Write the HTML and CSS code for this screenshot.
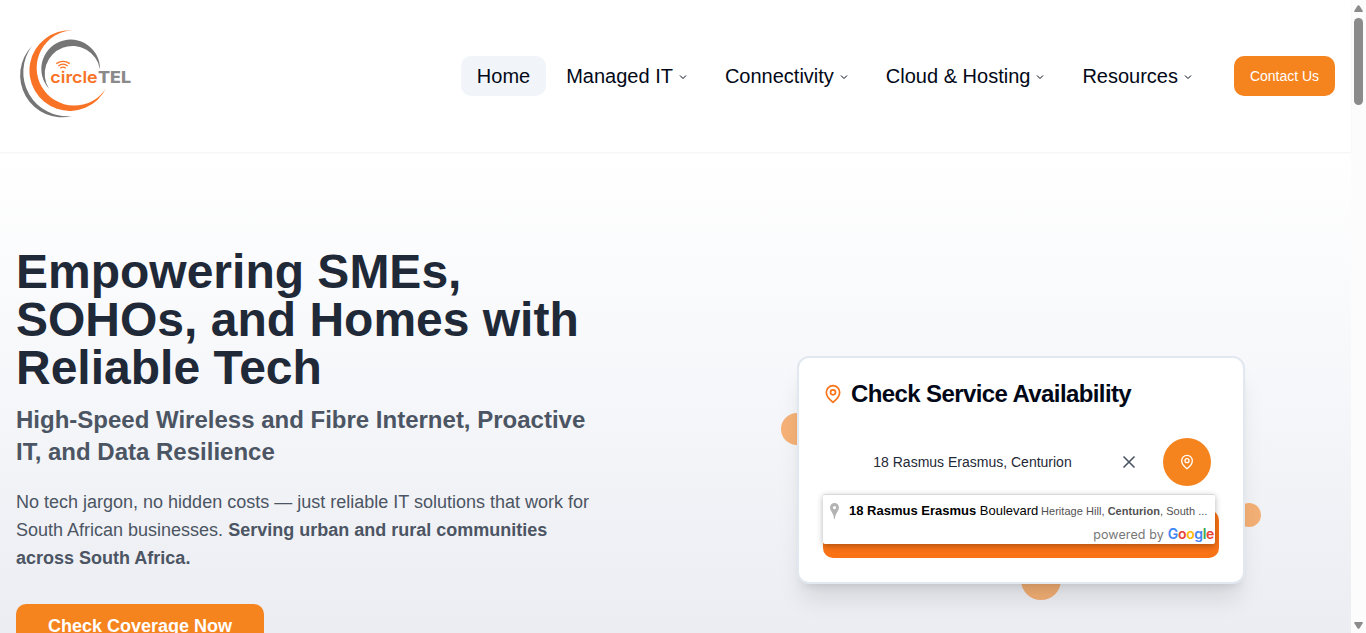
FILE: index.html
```html
<!DOCTYPE html>
<html lang="en">
<head>
<meta charset="utf-8">
<title>CircleTEL</title>
<link rel="stylesheet" href="styles.css">
</head>
<body>
<div class="window">
<div class="page">
  <header class="header">
    <svg class="logo" viewBox="0 0 480 360" role="img" aria-label="circleTEL">
      <path fill="#757575" d="M96 108A126 126 0 0 0 217 318A132 132 0 0 1 96 108Z"/>
      <path fill="#f97326" d="M217 61A121 121 0 1 0 318 235A113 113 0 1 1 217 61Z"/>
      <path fill="#757575" d="M147 236A88 88 0 1 1 300 178A83.500 83.500 0 1 0 147 236Z"/>
      <g fill="none" stroke="#f97326" stroke-width="4"><path d="M169 161q20-14 40 0M175 168q14-11 28 0M181 175q8-7 16 0"/></g>
      <text class="logo-a" x="151" y="218" textLength="142" lengthAdjust="spacingAndGlyphs">circle</text>
      <text class="logo-b" x="294" y="218" textLength="99" lengthAdjust="spacingAndGlyphs">TEL</text>
    </svg>
    <nav class="nav">
      <a class="item active">Home</a>
      <a class="item">Managed IT<svg class="chev" viewBox="0 0 24 24"><path d="m6 9 6 6 6-6"/></svg></a>
      <a class="item">Connectivity<svg class="chev" viewBox="0 0 24 24"><path d="m6 9 6 6 6-6"/></svg></a>
      <a class="item">Cloud &amp; Hosting<svg class="chev" viewBox="0 0 24 24"><path d="m6 9 6 6 6-6"/></svg></a>
      <a class="item">Resources<svg class="chev" viewBox="0 0 24 24"><path d="m6 9 6 6 6-6"/></svg></a>
    </nav>
    <a class="contact">Contact Us</a>
  </header>
  <main class="hero">
    <section class="copy">
      <h1>Empowering SMEs,<br>SOHOs, and Homes with<br>Reliable Tech</h1>
      <h2>High-Speed Wireless and Fibre Internet, Proactive<br>IT, and Data Resilience</h2>
      <p>No tech jargon, no hidden costs — just reliable IT solutions that work for<br>South African businesses. <strong>Serving urban and rural communities<br>across South Africa.</strong></p>
      <a class="cta">Check Coverage Now</a>
    </section>
    <section class="visual">
      <span class="dot dot-left"></span><span class="dot dot-right"></span><span class="dot dot-bottom"></span>
      <div class="card">
        <h3><svg class="pin" viewBox="0 0 24 24"><path d="M20 10c0 6-8 12-8 12s-8-6-8-12a8 8 0 0 1 16 0Z"/><circle cx="12" cy="10" r="3"/></svg>Check Service Availability</h3>
        <div class="search">
          <span class="address">18 Rasmus Erasmus, Centurion</span>
          <svg class="clear" viewBox="0 0 24 24"><path d="M18 6 6 18M6 6l12 12"/></svg>
          <span class="locate"><svg viewBox="0 0 24 24"><path d="M20 10c0 6-8 12-8 12s-8-6-8-12a8 8 0 0 1 16 0Z"/><circle cx="12" cy="10" r="3"/></svg></span>
        </div>
        <div class="submit"></div>
        <div class="suggest">
          <div class="row">
            <svg class="marker" viewBox="0 0 9 16"><path fill-rule="evenodd" d="M4.500 0A4.500 4.500 0 0 0 0 4.500C0 8 4 10.500 4.100 16h.8C5 10.500 9 8 9 4.500A4.500 4.500 0 0 0 4.500 0Zm0 3a1.600 1.600 0 1 1 0 3.200 1.600 1.600 0 0 1 0-3.200Z"/></svg>
            <span class="main"><b>18 Rasmus</b> <b>Erasmus</b> Boulevard</span>
            <span class="minor">Heritage Hill, <b>Centurion</b>, South ...</span>
          </div>
          <div class="powered">powered by <span class="google"><i class="blue">G</i><i class="red">o</i><i class="yellow">o</i><i class="blue">g</i><i class="green">l</i><i class="red">e</i></span></div>
        </div>
      </div>
    </section>
  </main>
</div>
<aside class="scroll">
  <svg viewBox="0 0 9 7"><path d="M1 7h7q1.300-.2.700-1.300L5.500.8q-1-1.200-2 0L.3 5.700Q-.3 6.800 1 7Z"/></svg>
  <span class="thumb"></span>
  <svg class="down" viewBox="0 0 9 7"><path d="M1 0h7q1.300.2.700 1.300L5.500 6.200q-1 1.200-2 0L.3 1.300Q-.3.200 1 0Z"/></svg>
</aside>
</div>
</body>
</html>
```
FILE: styles.css
```css
* { box-sizing: border-box; }
body { margin: 0; font-family: "Liberation Sans", Arial, sans-serif; color: #020817; }
h1, h2, h3, p { margin: 0; }
.window { display: flex; height: 633px; overflow: hidden; }
.page { width: 1351px; flex: none; display: flex; flex-direction: column; }
.header { height: 152px; flex: none; display: flex; align-items: flex-start; padding-right: 16px; background: #fff; box-shadow: 0 1px 2px rgba(0,0,0,.05); position: relative; }
.logo { width: 160px; height: 120px; margin-top: 10px; }
.logo-a, .logo-b { font-family: Inter, sans-serif; font-weight: 600; font-size: 49px; }
.logo-a { fill: #f97326; }
.logo-b { fill: #8a8a8a; font-weight: 800; }
.nav { display: flex; gap: 4px; margin: 56px 24px 0 auto; }
.item { display: flex; align-items: center; height: 40px; padding: 0 16px; border-radius: 10px; font-size: 20px; white-space: nowrap; }
.active { background: #f1f5f9; }
.chev { width: 12px; height: 12px; margin: 2px 0 0 4px; fill: none; stroke: currentColor; stroke-width: 2; }
.contact { width: 101px; height: 40px; margin-top: 56px; display: grid; place-items: center; border-radius: 10px; background: #f5841f; color: #fff; font-size: 14px; }
.hero { flex: none; height: 481px; display: flex; justify-content: space-between; padding: 96px 106px 0 16px; background: linear-gradient(#fff, #f6f7fa 50%, #f2f3f7 68%, #ecedf2); }
.copy { width: 600px; white-space: nowrap; }
h1 { font-size: 48px; line-height: 48px; color: #1f2937; }
h2 { margin-top: 12px; font-size: 24px; line-height: 32px; color: #4b5563; }
p { margin-top: 20px; font-size: 18px; line-height: 28px; color: #4b5563; }
.cta { margin-top: 32px; width: 248px; height: 44px; display: grid; place-items: center; border-radius: 10px; background: #f5841f; color: #fff; font-size: 18px; font-weight: 700; }
.visual { position: relative; width: 448px; height: 228px; margin-top: 108px; }
.dot { position: absolute; border-radius: 50%; background: #f5841f; opacity: .6; }
.dot-left { width: 32px; height: 32px; left: -16px; top: 57px; }
.dot-right { width: 24px; height: 24px; right: -16px; top: 147px; }
.dot-bottom { width: 40px; height: 40px; left: 224px; bottom: -16px; }
.card { position: relative; height: 228px; padding: 24px; border: 2px solid #e2e8f0; border-radius: 12px; background: #fff; box-shadow: 0 20px 25px -5px rgba(0,0,0,.1), 0 8px 10px -6px rgba(0,0,0,.1); }
h3 { display: flex; align-items: center; gap: 8px; height: 24px; font-size: 24px; letter-spacing: -.6px; white-space: nowrap; }
.pin { width: 20px; height: 20px; fill: none; stroke: #f97316; stroke-width: 2; }
.search { display: flex; align-items: center; height: 48px; margin-top: 32px; padding-right: 8px; color: #1f2937; font-size: 14px; }
.address { flex: 1; padding-left: 3px; text-align: center; }
.clear { width: 20px; height: 20px; margin-right: 24px; fill: none; stroke: #4b5563; stroke-width: 2; stroke-linecap: round; }
.locate { width: 48px; height: 48px; border-radius: 50%; display: grid; place-items: center; background: #f5841f; }
.locate svg { width: 16px; height: 16px; fill: none; stroke: #fff; stroke-width: 2; }
.submit { height: 48px; margin-top: 24px; border-radius: 10px; background: #f97316; }
.suggest { position: absolute; left: 24px; top: 136px; width: 392px; height: 50px; border-top: 1px solid #d9d9d9; border-radius: 2px; background: #fff; box-shadow: 0 2px 6px rgba(0,0,0,.3); }
.row { display: flex; align-items: center; height: 31px; padding-left: 7px; font-size: 13px; white-space: nowrap; color: #000; }
.marker { width: 9px; height: 16px; margin-right: 10px; fill: #b3b3b3; }
.main { width: 189px; margin-right: 3px; }
.minor { font-size: 11px; color: #515151; letter-spacing: .04px; }
.powered { display: flex; justify-content: flex-end; align-items: baseline; gap: 4px; padding-right: 1px; font: 12.5px/16px Inter, sans-serif; color: #777; letter-spacing: .1px; }
.google { font-size: 14px; letter-spacing: -.35px; font-weight: 600; }
.google i { font-style: normal; }
.blue { color: #4285f4; }
.red { color: #ea4335; }
.yellow { color: #fbbc05; }
.green { color: #34a853; }
.scroll { width: 15px; flex: none; background: #fcfcfc; display: flex; flex-direction: column; align-items: center; padding: 5px 0 4px; }
.scroll svg { width: 9px; height: 7px; fill: #8b8b8b; }
.thumb { width: 9px; height: 87px; margin-top: 6px; border-radius: 5px; background: #8b8b8b; }
.scroll .down { margin-top: auto; }
```
